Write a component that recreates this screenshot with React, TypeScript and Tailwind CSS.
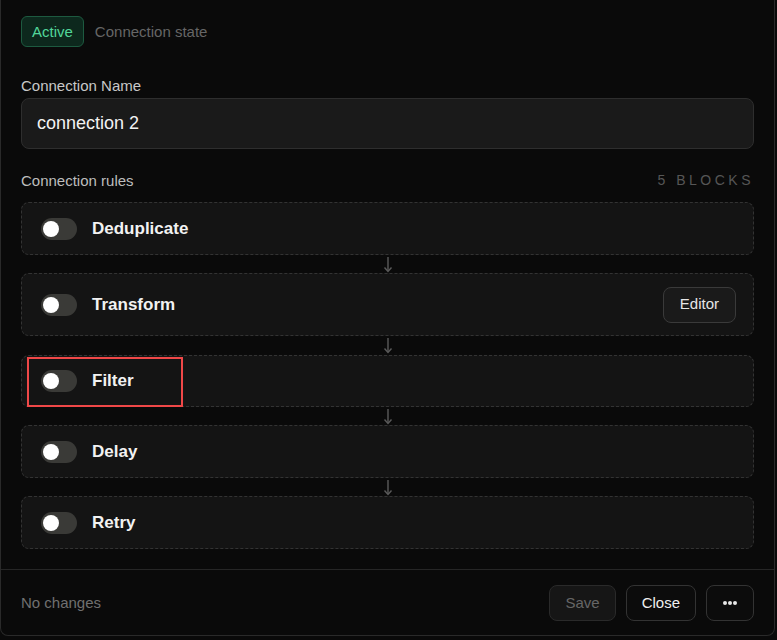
import React from "react";

function Toggle() {
  return (
    <div className="relative h-[22px] w-[36px] shrink-0 rounded-full bg-[#3a3a37]">
      <div className="absolute left-[2px] top-[3px] h-[16px] w-[16px] rounded-full bg-white" />
    </div>
  );
}

function Arrow({ tall }: { tall?: boolean }) {
  return (
    <div className={`flex items-center justify-center ${tall ? "h-[19px]" : "h-[18px]"}`}>
      <svg width="10" height="17" viewBox="0 0 10 17" fill="none">
        <path d="M5 1 V15" stroke="#5a5a5a" strokeWidth="1.4" />
        <path d="M1.5 11.5 L5 15.5 L8.5 11.5" stroke="#5a5a5a" strokeWidth="1.4" fill="none" />
      </svg>
    </div>
  );
}

function Block({
  label,
  size,
  editor,
  highlight,
}: {
  label: string;
  size?: "tall" | "short";
  editor?: boolean;
  highlight?: boolean;
}) {
  const h = size === "tall" ? "h-[63px]" : size === "short" ? "h-[52px]" : "h-[53px]";
  return (
    <div
      className={`relative flex items-center justify-between rounded-[8px] border border-dashed border-[#333333] bg-[#141414] pl-[19px] pr-[17px] ${h}`}
    >
      <div className="flex items-center gap-[15px]">
        <Toggle />
        <span className="text-[17px] font-bold leading-[20px] text-[#f2f2f2]">{label}</span>
      </div>
      {editor && (
        <button className="flex h-[36px] items-center rounded-[8px] border border-[#3a3a3a] bg-[#1a1a1a] px-[16px] text-[15px] text-[#e6e6e6]">
          Editor
        </button>
      )}
      {highlight && (
        <div className="pointer-events-none absolute left-[5px] top-[1px] h-[50px] w-[156px] border-[2px] border-[#f04848]" />
      )}
    </div>
  );
}

export default function App() {
  return (
    <div
      className="min-h-[640px] w-[777px] bg-[#0a0a0a]"
      style={{ fontFamily: '"Liberation Sans", Arial, sans-serif' }}
    >
      <div className="w-[775px] rounded-b-[8px] border-x border-b border-[#2a2a2a] bg-[#0a0a0a]">
        <div className="px-[20px] pb-[20px] pt-[16px]">
          <div className="flex h-[31px] items-center gap-[11px]">
            <span className="flex h-[31px] items-center rounded-[6px] border border-[#1d5a40] bg-[#0d281d] px-[10px] pt-[1px] text-[15px] text-[#52d69a]">
              Active
            </span>
            <span className="pt-[1px] text-[15px] text-[#666666]">Connection state</span>
          </div>

          <div className="mt-[30px] text-[15px] leading-[17px] text-[#c8c8c8]">Connection Name</div>
          <div className="mt-[4px] flex h-[51px] items-center rounded-[8px] border border-[#2e2e2e] bg-[#1a1a1a] px-[15px] text-[18px] text-[#f2f2f2]">
            connection 2
          </div>

          <div className="mt-[23px] flex items-center justify-between leading-[17px]">
            <span className="text-[15px] text-[#bdbdbd]">Connection rules</span>
            <span className="text-[14px] tracking-[0.25em] text-[#565656]">5 BLOCKS</span>
          </div>

          <div className="mt-[13px] flex flex-col">
            <Block label="Deduplicate" />
            <Arrow />
            <Block label="Transform" size="tall" editor />
            <Arrow tall />
            <Block label="Filter" size="short" highlight />
            <Arrow />
            <Block label="Delay" />
            <Arrow />
            <Block label="Retry" />
          </div>
        </div>

        <div className="flex items-center justify-between border-t border-[#262626] px-[20px] pb-[14px] pt-[15px]">
          <span className="text-[15px] text-[#707070]">No changes</span>
          <div className="flex items-center gap-[10px]">
            <button className="flex h-[36px] items-center rounded-[8px] border border-[#2a2a2a] bg-[#161616] px-[15px] text-[15px] text-[#666666]">
              Save
            </button>
            <button className="flex h-[36px] items-center rounded-[8px] border border-[#333333] bg-[#0c0c0c] px-[15px] text-[15px] text-[#f0f0f0]">
              Close
            </button>
            <button className="flex h-[36px] w-[48px] items-center justify-center gap-[1px] rounded-[8px] border border-[#333333] bg-[#0c0c0c]">
              <span className="h-[4px] w-[4px] rounded-full bg-[#e8e8e8]" />
              <span className="h-[4px] w-[4px] rounded-full bg-[#e8e8e8]" />
              <span className="h-[4px] w-[4px] rounded-full bg-[#e8e8e8]" />
            </button>
          </div>
        </div>
      </div>
    </div>
  );
}
